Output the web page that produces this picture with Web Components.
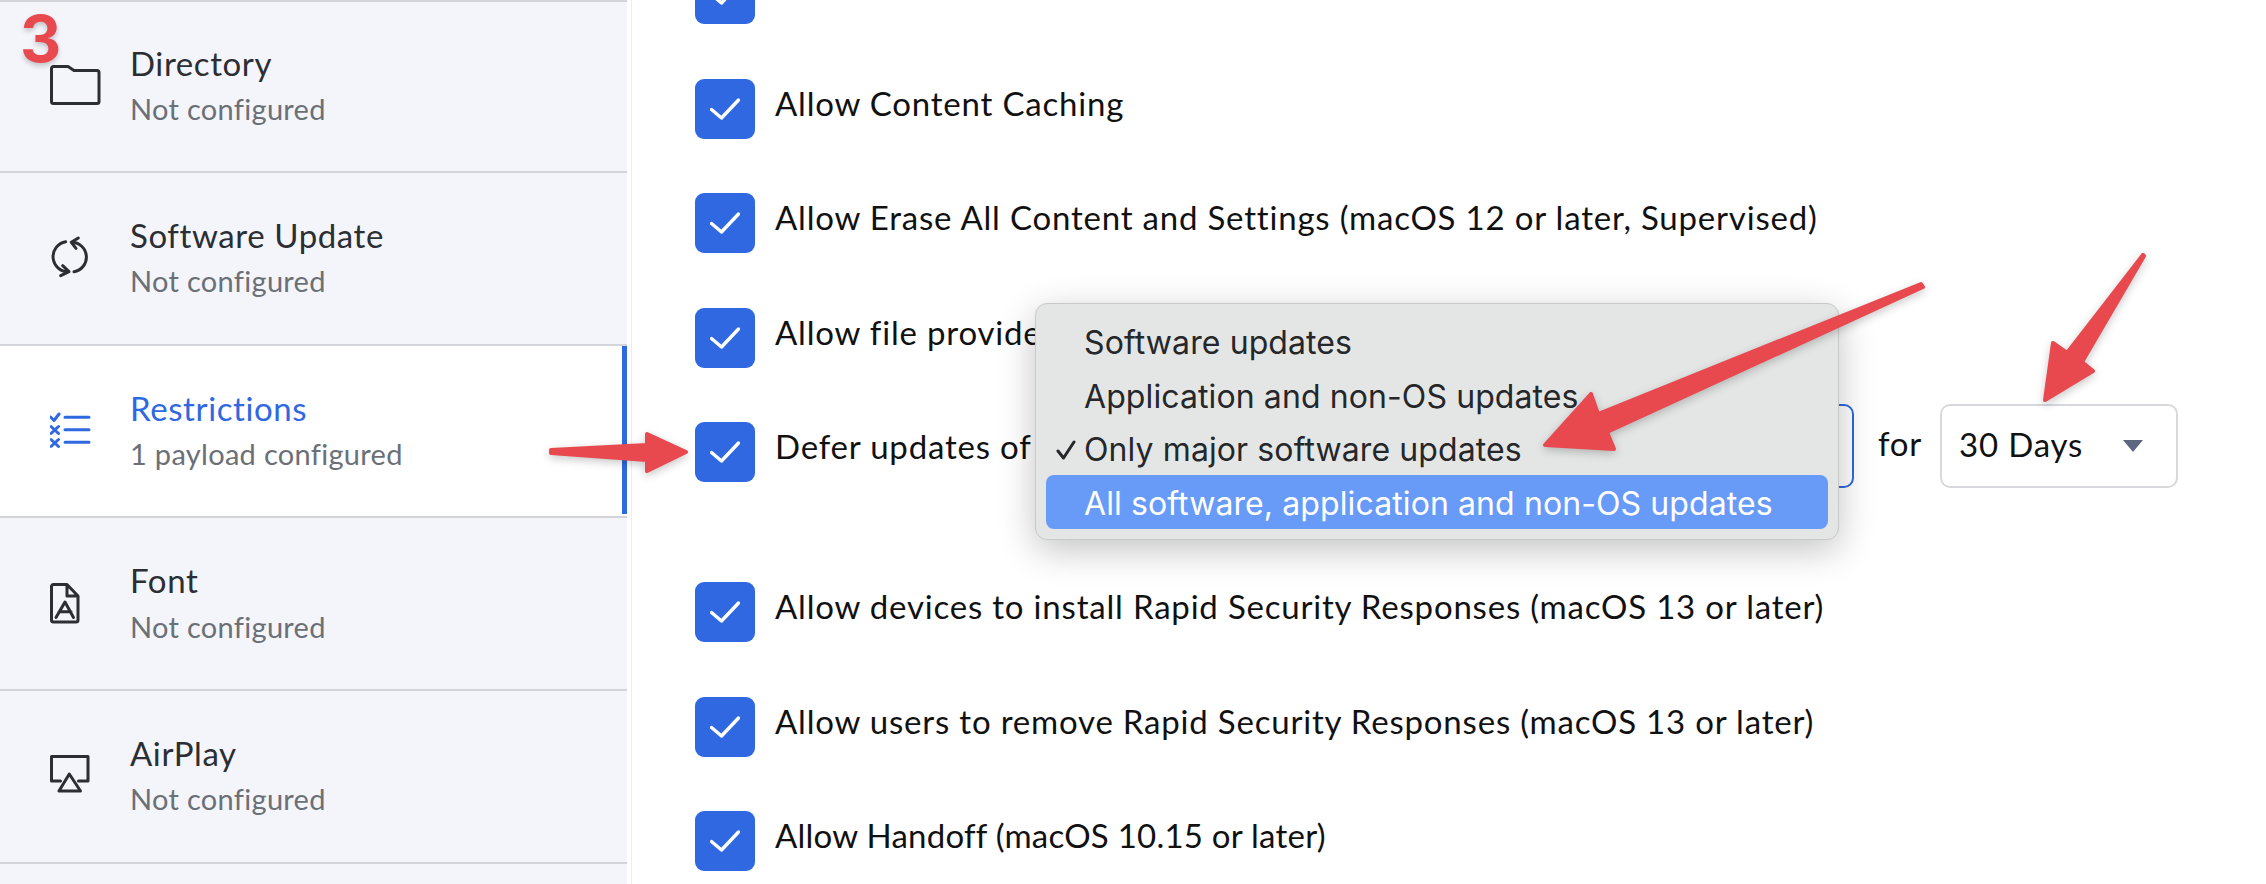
<!DOCTYPE html>
<html lang="en">
<head>
<meta charset="utf-8">
<title>Restrictions</title>
<style>
html, body { margin: 0; height: 100%; overflow: hidden; background: #fff; }
body { font-family: "Lato", "Liberation Sans", sans-serif; }
</style>
</head>
<body>
<payload-page></payload-page>

<script>
const ICONS = {
  folder: `<path d="M3.5 20.5H18L24 24.5H47a2 2 0 0 1 2 2V55.5a2 2 0 0 1-2 2H3.5a2 2 0 0 1-2-2V22.5a2 2 0 0 1 2-2z"/>`,
  sync: `<path d="M15.7 24.7A15.1 15.1 0 0 0 18.3 54.7M10.7 58.7L19 54.7L12.7 48.7M24 54.7A14.8 14.8 0 0 0 21.7 25.3M28.3 21L21.3 25.3L26 31.3"/>`,
  list: `<path d="M.5 27L4 30.5L9 24M1 36.5L8.5 43.5M8.5 36.5L1 43.5M1 49.5L8.5 56.5M8.5 49.5L1 56.5" stroke-width="3"/><path d="M15 27.3H39M15 39.7H39M15 52.3H39"/>`,
  font: `<path d="M3.5 21.5H17L28 33V57a2 2 0 0 1-2 2H3.5a2 2 0 0 1-2-2V23.5a2 2 0 0 1 2-2zM17 21.5V33H28M6 54.5L15 39L23.5 54.5M9 48.7H21"/>`,
  airplay: `<path d="M10.5 46H1.5V21.5H38V46H28.5M19.3 39L9 56H30.5Z"/>`
}

class SideItem extends HTMLElement {
  constructor() {
    super()
    const shadow = this.attachShadow({ mode: 'open' })
    shadow.innerHTML = `
      <style>
        :host {
          display: flex;
          align-items: center;
          height: 172.7px;
          box-sizing: border-box;
          padding-left: 50px;
          border-bottom: 2px solid #d3d5db;
          color: #2b2e33;
          position: relative;
        }
        :host([active]) { background: #fff; color: #2f68e0; }
        :host([active])::after {
          content: "";
          position: absolute;
          right: 0; top: 0; bottom: 2px;
          width: 5px;
          background: #2f68e0;
        }
        svg { width: 80px; height: 80px; flex: none; fill: none; stroke: currentColor; stroke-width: 3; stroke-linecap: round; stroke-linejoin: round; margin-top: -2px; }
        .text { display: flex; flex-direction: column; gap: 8.3px; margin-top: -2.4px; }
        .title { font-size: 33px; line-height: 40px; letter-spacing: .6px; }
        .sub { font-size: 29px; line-height: 36px; letter-spacing: .3px; color: #6b7077; }
      </style>
      <svg viewBox="0 0 80 80">${ICONS[this.getAttribute('icon')]}</svg>
      <div class="text">
        <div class="title"><slot></slot></div>
        <div class="sub">${this.getAttribute('sub') || 'Not configured'}</div>
      </div>
    `
  }
}
customElements.define('side-item', SideItem)

class CheckRow extends HTMLElement {
  constructor() {
    super()
    const shadow = this.attachShadow({ mode: 'open' })
    shadow.innerHTML = `
      <style>
        :host {
          display: flex;
          align-items: flex-start;
          min-height: 60px;
          color: #111;
          font-size: 33px;
          letter-spacing: .8px;
        }
        .box {
          width: 60px; height: 60px; flex: none;
          background: #2f68e0;
          border-radius: 9px;
          display: flex; align-items: center; justify-content: center;
        }
        svg { width: 30px; height: 22px; fill: none; stroke: #fff; stroke-width: 3.4; stroke-linecap: round; stroke-linejoin: round; }
        .label { margin-left: 20px; line-height: 48px; white-space: nowrap; }
      </style>
      <div class="box"><svg viewBox="0 0 30 22"><path d="M1.5 11.5L11.5 20L28.5 2"/></svg></div>
      <div class="label"><slot></slot></div>
      <slot name="extra"></slot>
    `
  }
}
customElements.define('check-row', CheckRow)

class SelectBox extends HTMLElement {
  constructor() {
    super()
    const shadow = this.attachShadow({ mode: 'open' })
    shadow.innerHTML = `
      <style>
        :host {
          display: flex;
          align-items: center;
          justify-content: space-between;
          box-sizing: border-box;
          height: 84px;
          padding: 0 33px 0 17px;
          background: #fff;
          border: 2px solid #d8d9de;
          border-radius: 10px;
          font-size: 33px;
          color: #111;
        }
        :host([focused]) { border-color: #2f68e0; }
        span { padding-bottom: 4px; }
        i { width: 0; height: 0; border-style: solid; border-width: 12px 10px 0 10px; border-color: #5d6880 transparent transparent; }
      </style>
      <span><slot></slot></span><i></i>
    `
  }
}
customElements.define('select-box', SelectBox)

class PopMenu extends HTMLElement {
  constructor() {
    super()
    const shadow = this.attachShadow({ mode: 'open' })
    shadow.innerHTML = `
      <style>
        :host {
          position: absolute;
          left: 1035px; top: 303px;
          width: 804px; height: 237px;
          box-sizing: border-box;
          padding: 10px 10px;
          background: #e4e6e5;
          border: 1px solid #c8c9c9;
          border-radius: 12px;
          box-shadow: 0 10px 36px rgba(0,0,0,.24);
          font-family: "Inter", "Liberation Sans", sans-serif;
          font-size: 32px;
          letter-spacing: .1px;
          color: #25272a;
          display: flex; flex-direction: column;
        }
      </style>
      <slot></slot>
    `
  }
}
customElements.define('pop-menu', PopMenu)

class PopItem extends HTMLElement {
  constructor() {
    super()
    const shadow = this.attachShadow({ mode: 'open' })
    shadow.innerHTML = `
      <style>
        :host {
          display: flex; align-items: center;
          box-sizing: border-box;
          height: 54px;
          padding: 3px 0 0 38px;
          border-radius: 8px;
          position: relative;
          white-space: nowrap;
        }
        :host([highlight]) { background: #689bf8; color: #fff; }
        svg { position: absolute; left: 10px; top: 18px; width: 20px; height: 20px; fill: none; stroke: #25272a; stroke-width: 3; stroke-linecap: round; stroke-linejoin: round; display: none; }
        :host([checked]) svg { display: block; }
      </style>
      <svg viewBox="0 0 20 20"><path d="M2 11L7.5 18L18 2"/></svg>
      <slot></slot>
    `
  }
}
customElements.define('pop-item', PopItem)

class RedMarks extends HTMLElement {
  constructor() {
    super()
    const shadow = this.attachShadow({ mode: 'open' })
    shadow.innerHTML = `
      <style>
        :host { position: absolute; inset: 0; pointer-events: none; }
        svg { position: absolute; left: 0; top: 0; width: 2266px; height: 884px; filter: drop-shadow(0 3px 4px rgba(0,0,0,.22)); }
        polygon { fill: #e8494f; stroke: #e8494f; stroke-width: 4; stroke-linejoin: round; }
        .num { position: absolute; left: 20px; top: 2px; font: 700 64px/74px "Inter", "Liberation Sans", sans-serif; color: #e8494f; text-shadow: 0 3px 5px rgba(0,0,0,.2); }
      </style>
      <svg viewBox="0 0 2266 884">
        <polygon points="551,450 647,445 647,434 686,452 647,471 647,460 551,453"/>
        <polygon points="1921,284 1598,414 1591,394 1545,445 1614,449 1607,432 1923,287"/>
        <polygon points="2143,255 2067,353 2053,343 2045,400 2093,371 2082,362 2144,256"/>
      </svg>
      <div class="num">3</div>
    `
  }
}
customElements.define('red-marks', RedMarks)

class PayloadPage extends HTMLElement {
  constructor() {
    super()
    const shadow = this.attachShadow({ mode: 'open' })
    shadow.innerHTML = `
      <style>
        :host {
          display: grid;
          grid-template-columns: 627px 1fr;
          width: 2266px; height: 884px;
          overflow: hidden;
          position: relative;
        }
        .side { background: #f4f5fa; border-top: 2px solid #d3d5db; }
        .side side-item:first-child { height: 171px; }
        .main { margin-left: 4px; border-left: 1px solid #ecedf0; padding-left: 63px; display: flex; flex-direction: column; gap: 54.5px; margin-top: -36px; }
        .for { font-size: 33px; margin: -6px 18px 0 24.4px; }
        .extra { display: flex; align-items: center; margin-top: -18px; }
        .defer { margin-bottom: 39.5px; }
        .sel1 { width: 816px; margin-left: 6px; }
        .sel2 { width: 238px; }
        .tight { letter-spacing: .24px; }
      </style>
      <nav class="side">
        <side-item icon="folder">Directory</side-item>
        <side-item icon="sync">Software Update</side-item>
        <side-item icon="list" active sub="1 payload configured">Restrictions</side-item>
        <side-item icon="font">Font</side-item>
        <side-item icon="airplay">AirPlay</side-item>
      </nav>
      <section class="main">
        <check-row></check-row>
        <check-row>Allow Content Caching</check-row>
        <check-row>Allow Erase All Content and Settings (macOS 12 or later, Supervised)</check-row>
        <check-row>Allow file provide</check-row>
        <check-row class="defer">Defer updates of
          <div slot="extra" class="extra">
            <select-box class="sel1" focused></select-box>
            <span class="for">for</span>
            <select-box class="sel2">30 Days</select-box>
          </div>
        </check-row>
        <check-row>Allow devices to install Rapid Security Responses (macOS 13 or later)</check-row>
        <check-row>Allow users to remove Rapid Security Responses (macOS 13 or later)</check-row>
        <check-row class="tight">Allow Handoff (macOS 10.15 or later)</check-row>
      </section>
      <pop-menu>
        <pop-item>Software updates</pop-item>
        <pop-item>Application and non-OS updates</pop-item>
        <pop-item checked>Only major software updates</pop-item>
        <pop-item highlight>All software, application and non-OS updates</pop-item>
      </pop-menu>
      <red-marks></red-marks>
    `
  }
}
customElements.define('payload-page', PayloadPage)
</script>
</body>
</html>
